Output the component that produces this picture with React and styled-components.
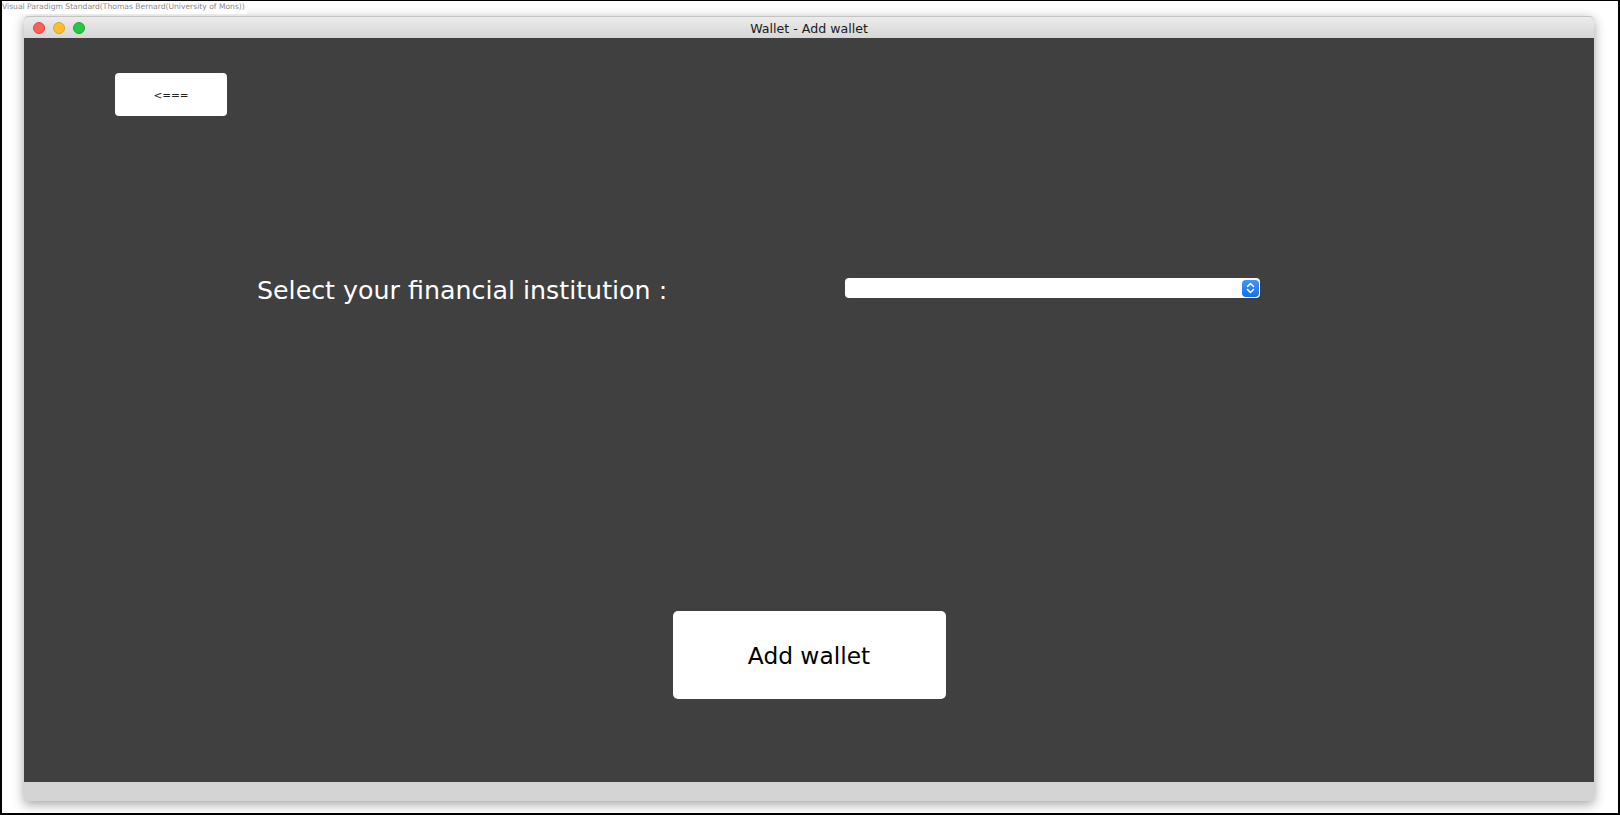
import React from "react";
import styled, { createGlobalStyle } from "styled-components";

const Global = createGlobalStyle`
  html, body { margin: 0; padding: 0; background: #ffffff; }
  body { font-family: "DejaVu Sans", "Liberation Sans", sans-serif; }
  * { box-sizing: border-box; }
`;

const Frame = styled.div`
  position: relative;
  width: 1620px;
  height: 815px;
  background: #ffffff;
  border: 2px solid #000000;
  border-top-width: 1px;
  padding: 15px 0 0 22px;
  overflow: hidden;
`;

const Caption = styled.div`
  position: absolute;
  top: 0;
  left: 0;
  padding: 1px 2px 2px 0;
  background: #ffffff;
  color: #8a8a8a;
  font-family: "DejaVu Sans", sans-serif;
  font-size: 7.6px;
  line-height: 10px;
  white-space: nowrap;
`;

const Window = styled.div`
  width: 1570px;
  height: 785px;
  display: flex;
  flex-direction: column;
  border-radius: 5px 5px 0 0;
  box-shadow: 0 3px 12px rgba(0, 0, 0, 0.38);
  background: #d4d4d4;
`;

const TitleBar = styled.div`
  position: relative;
  height: 22px;
  flex: none;
  display: flex;
  align-items: center;
  justify-content: center;
  padding-top: 2px;
  border-radius: 5px 5px 0 0;
  border-top: 1px solid #c4c4c4;
  background: linear-gradient(#ececec, #d6d6d6);
  font-family: "DejaVu Sans", sans-serif;
  font-size: 12.6px;
  color: #1a1a1a;
`;

const Lights = styled.div`
  position: absolute;
  left: 9px;
  top: 5px;
  display: flex;
  gap: 8px;
`;

const Light = styled.span`
  width: 12px;
  height: 12px;
  border-radius: 50%;
  background: ${(p) => p.$color};
  border: 0.5px solid ${(p) => p.$edge};
`;

const Content = styled.div`
  flex: none;
  height: 744px;
  background: #404040;
  display: flex;
  flex-direction: column;
`;

const BackBar = styled.div`
  padding: 35px 0 0 91px;
`;

const BackButton = styled.button`
  width: 112px;
  height: 43px;
  border: none;
  border-radius: 4px;
  background: #ffffff;
  color: #222222;
  font-family: "DejaVu Sans", sans-serif;
  font-size: 10.5px;
  padding: 0;
`;

const Row = styled.div`
  margin-top: 162px;
  padding-left: 233px;
  height: 20px;
  display: flex;
  align-items: center;
`;

const Label = styled.div`
  width: 588px;
  padding-top: 6px;
  color: #ffffff;
  font-family: "DejaVu Sans", sans-serif;
  font-size: 25.3px;
  line-height: 30px;
  white-space: nowrap;
`;

const Combo = styled.div`
  width: 415px;
  height: 20px;
  border-radius: 4px;
  background: #ffffff;
  display: flex;
  align-items: center;
  justify-content: flex-end;
  padding-right: 1px;
`;

const Stepper = styled.div`
  width: 17px;
  height: 17px;
  border-radius: 4px;
  background: linear-gradient(#3d96fb, #1470f0);
  display: flex;
  align-items: center;
  justify-content: center;
`;

const AddButton = styled.button`
  align-self: center;
  margin-top: 313px;
  width: 273px;
  height: 88px;
  border: none;
  border-radius: 5px;
  background: #ffffff;
  color: #000000;
  font-family: "DejaVu Sans", sans-serif;
  font-size: 23.3px;
  padding: 0;
`;

const BottomStrip = styled.div`
  flex: 1;
  background: #d4d4d4;
`;

export default function App() {
  return (
    <>
      <Global />
      <Frame>
        <Caption>Visual Paradigm Standard(Thomas Bernard(University of Mons))</Caption>
        <Window>
          <TitleBar>
            <Lights>
              <Light $color="#fe5f57" $edge="#e0443e" />
              <Light $color="#febc2e" $edge="#dea123" />
              <Light $color="#28c840" $edge="#1aab29" />
            </Lights>
            Wallet - Add wallet
          </TitleBar>
          <Content>
            <BackBar>
              <BackButton>&lt;===</BackButton>
            </BackBar>
            <Row>
              <Label>Select your financial institution :</Label>
              <Combo>
                <Stepper>
                  <svg width="9" height="12" viewBox="0 0 9 12" fill="none" stroke="#ffffff" strokeWidth="1.6" strokeLinecap="round" strokeLinejoin="round">
                    <path d="M1.5 4.5 L4.5 1.5 L7.5 4.5" />
                    <path d="M1.5 7.5 L4.5 10.5 L7.5 7.5" />
                  </svg>
                </Stepper>
              </Combo>
            </Row>
            <AddButton>Add wallet</AddButton>
          </Content>
          <BottomStrip />
        </Window>
      </Frame>
    </>
  );
}
